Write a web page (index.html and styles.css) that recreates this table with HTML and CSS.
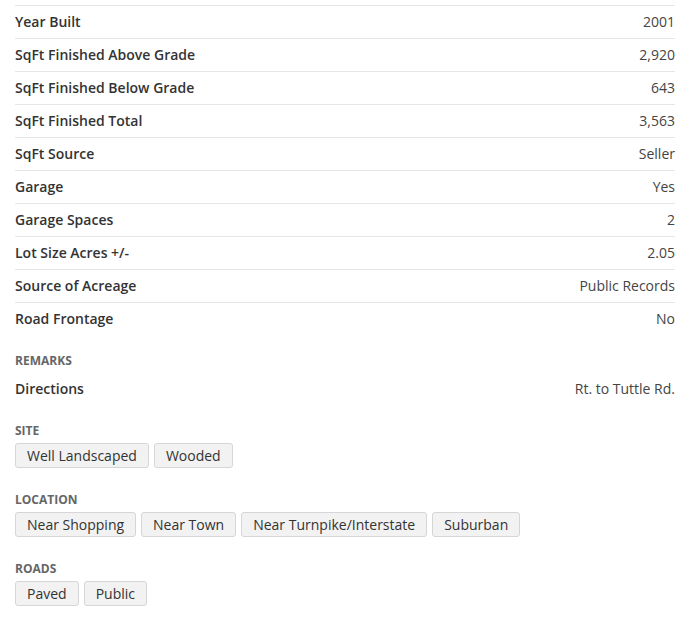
FILE: index.html
```html
<!DOCTYPE html>
<html>
<head>
<meta charset="utf-8">
<link rel="stylesheet" href="styles.css">
</head>
<body>
<div class="details">
  <div class="rows">
    <div class="row"><span class="label">Year Built</span><span class="value">2001</span></div>
    <div class="row"><span class="label">SqFt Finished Above Grade</span><span class="value">2,920</span></div>
    <div class="row"><span class="label">SqFt Finished Below Grade</span><span class="value">643</span></div>
    <div class="row"><span class="label">SqFt Finished Total</span><span class="value">3,563</span></div>
    <div class="row"><span class="label">SqFt Source</span><span class="value">Seller</span></div>
    <div class="row"><span class="label">Garage</span><span class="value">Yes</span></div>
    <div class="row"><span class="label">Garage Spaces</span><span class="value">2</span></div>
    <div class="row"><span class="label">Lot Size Acres +/-</span><span class="value">2.05</span></div>
    <div class="row"><span class="label">Source of Acreage</span><span class="value">Public Records</span></div>
    <div class="row last"><span class="label">Road Frontage</span><span class="value">No</span></div>
  </div>

  <div class="section remarks">
    <h3 class="heading">REMARKS</h3>
    <div class="row last"><span class="label">Directions</span><span class="value">Rt. to Tuttle Rd.</span></div>
  </div>

  <div class="section site">
    <h3 class="heading">SITE</h3>
    <div class="tags"><span class="tag">Well Landscaped</span><span class="tag">Wooded</span></div>
  </div>

  <div class="section">
    <h3 class="heading">LOCATION</h3>
    <div class="tags"><span class="tag">Near Shopping</span><span class="tag">Near Town</span><span class="tag">Near Turnpike/Interstate</span><span class="tag">Suburban</span></div>
  </div>

  <div class="section">
    <h3 class="heading">ROADS</h3>
    <div class="tags"><span class="tag">Paved</span><span class="tag">Public</span></div>
  </div>
</div>
</body>
</html>
```

FILE: styles.css
```css
html, body {
  margin: 0;
  padding: 0;
  background: #fff;
}
body {
  font-family: "Open Sans", "Liberation Sans", sans-serif;
  font-size: 14px;
  color: #333;
}
.details {
  padding: 5px 17px 0 15px;
}
.rows {
  border-top: 1px solid #e6e6e6;
}
.row {
  display: flex;
  justify-content: space-between;
  align-items: center;
  height: 32px;
  border-bottom: 1px solid #e6e6e6;
  line-height: 20px;
}
.row.last {
  border-bottom: none;
}
.label {
  font-weight: 600;
  color: #333;
}
.value {
  color: #444;
}
.section {
  margin-top: 24px;
}
.section.remarks {
  margin-top: 18px;
}
.section.site {
  margin-top: 18px;
}
.heading {
  margin: 0 0 4px;
  font-size: 12px;
  font-weight: 700;
  color: #666;
  line-height: 16px;
}
.tags {
  display: flex;
  flex-wrap: wrap;
  gap: 5px;
  margin-top: 1px;
}
.tag {
  display: inline-block;
  height: 23px;
  line-height: 23px;
  padding: 0 11px;
  background: #f2f2f2;
  border: 1px solid #d6d6d6;
  border-radius: 3px;
  color: #333;
}
```
